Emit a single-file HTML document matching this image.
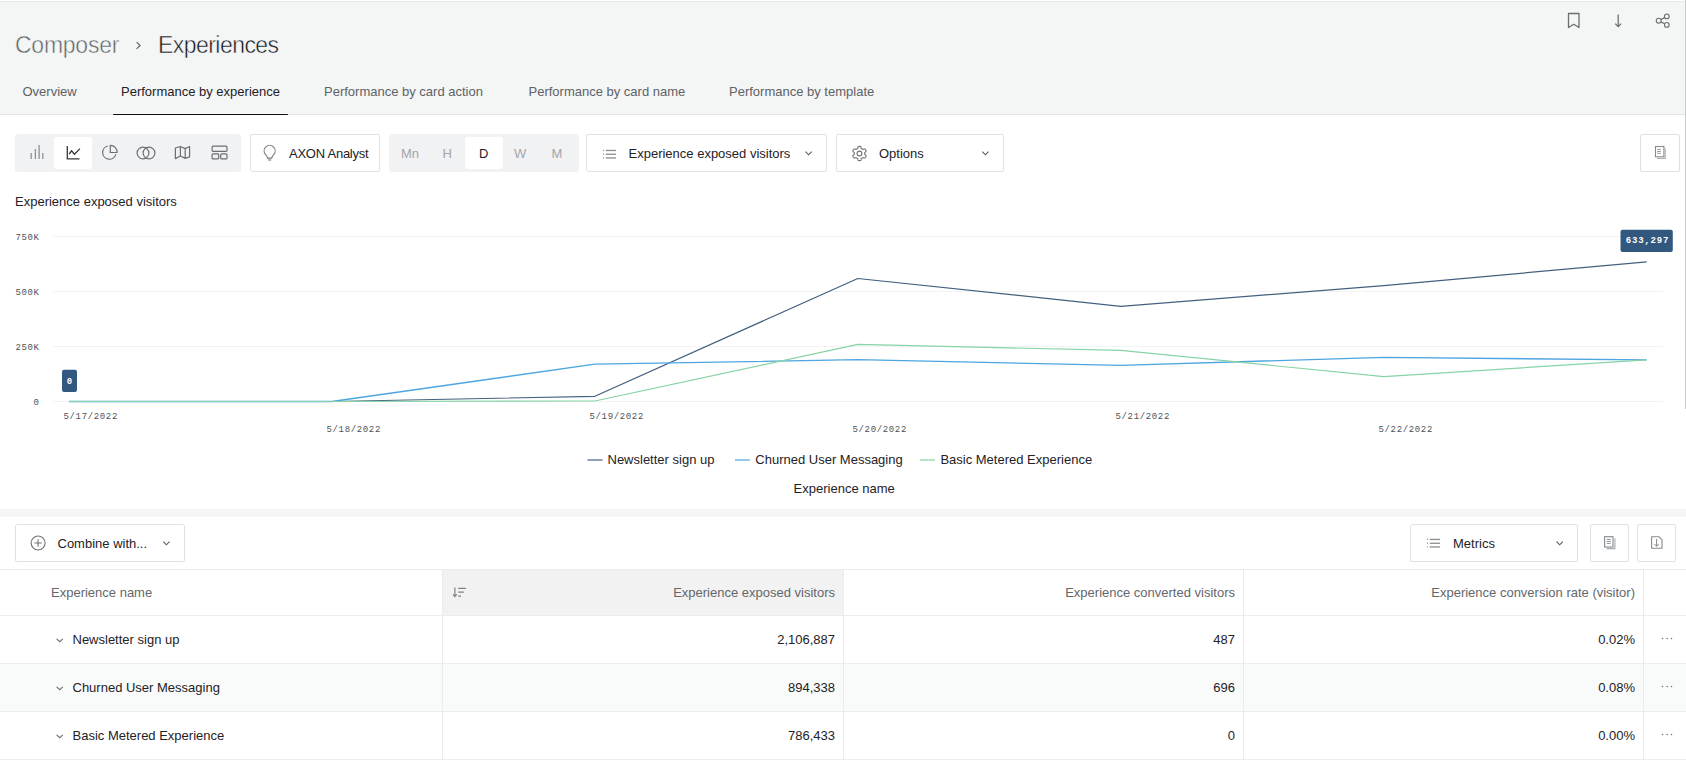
<!DOCTYPE html>
<html><head><meta charset="utf-8">
<style>
*{box-sizing:border-box;margin:0;padding:0}
html,body{width:1686px;height:760px;overflow:hidden;background:#fff;font-family:"Liberation Sans",sans-serif;color:#1e2226;font-size:13px}
.a{position:absolute}
#hdr{left:0;top:1px;width:1686px;height:114px;background:#f4f5f5;border-top:1px solid #e8eaea;border-bottom:1px solid #e3e5e5}
.crumb{font-size:23px;white-space:nowrap;line-height:1;-webkit-text-stroke:.5px #f4f5f5}
.tab{font-size:13px;color:#5f6266;white-space:nowrap;line-height:1}
.grp{background:#f1f2f3;border-radius:3px}
.act{background:#fff;border-radius:3px}
.btn{background:#fff;border:1px solid #dfe1e3;border-radius:2px}
.t13{font-size:13px;line-height:1;white-space:nowrap}
.mono{font-family:"Liberation Mono",monospace;font-size:9px;letter-spacing:.65px;color:#505356;line-height:1;white-space:nowrap}
.hd{color:#63676b}
.num{text-align:right}
svg{position:absolute;overflow:visible}
</style></head><body>
<div id="hdr" class="a"></div>
<div class="a" style="left:1685px;top:0;width:1px;height:409px;background:#c9cbcd"></div>

<!-- breadcrumb -->
<div class="a crumb" style="left:15px;top:33.5px;color:#5f6367;letter-spacing:-0.25px">Composer</div>
<svg style="left:0;top:0" width="200" height="60"><path d="M136.6 42.2L140.1 45.5L136.6 48.8" fill="none" stroke="#5a5e63" stroke-width="1.1"/></svg>
<div class="a crumb" style="left:158px;top:33.5px;color:#0d1116;letter-spacing:-0.55px">Experiences</div>

<!-- header icons -->
<svg style="left:0;top:0" width="1686" height="40">
 <path d="M1568.5 27.5V13.5H1579V27.5L1573.8 24.3Z" fill="none" stroke="#6b6f73" stroke-width="1.3" stroke-linejoin="round"/>
 <path d="M1618.2 14.5V26.5M1615.2 23.6L1618.2 26.6L1621.2 23.6" fill="none" stroke="#6b6f73" stroke-width="1.3"/>
 <circle cx="1666.8" cy="16.4" r="2.35" fill="none" stroke="#6b6f73" stroke-width="1.1"/>
 <circle cx="1666.8" cy="24.9" r="2.35" fill="none" stroke="#6b6f73" stroke-width="1.1"/>
 <circle cx="1658.7" cy="20.7" r="2.45" fill="none" stroke="#6b6f73" stroke-width="1.1"/>
 <path d="M1661 19.5L1664.6 17.6M1661 21.9L1664.6 23.7" stroke="#6b6f73" stroke-width="1.2"/>
</svg>

<!-- tabs -->
<div class="a tab" style="left:22.5px;top:85px">Overview</div>
<div class="a tab" style="left:121px;top:85px;color:#1e2226">Performance by experience</div>
<div class="a" style="left:113px;top:113px;width:175px;height:1px;background:#fbfbfb"></div><div class="a" style="left:113px;top:114px;width:175px;height:1.4px;background:#0c0f12;border-radius:1px"></div>
<div class="a tab" style="left:324px;top:85px">Performance by card action</div>
<div class="a tab" style="left:528.5px;top:85px">Performance by card name</div>
<div class="a tab" style="left:729px;top:85px">Performance by template</div>


<!-- toolbar -->
<div class="a grp" style="left:15px;top:134px;width:226px;height:38px"></div>
<div class="a act" style="left:54px;top:137px;width:38px;height:32px"></div>
<div class="a grp" style="left:389px;top:134px;width:190px;height:38px"></div>
<div class="a act" style="left:465px;top:137px;width:38px;height:32px"></div>
<div class="a btn" style="left:250px;top:134px;width:130px;height:38px"></div>
<div class="a btn" style="left:586px;top:134px;width:241px;height:38px"></div>
<div class="a btn" style="left:836px;top:134px;width:168px;height:38px"></div>
<div class="a btn" style="left:1640px;top:134px;width:40px;height:38px"></div>
<svg style="left:0;top:0" width="1686" height="200">
 <g stroke="#8d9196" stroke-width="1.3" fill="none">
  <path d="M31.2 153V159M35.4 149V159M39.1 145V159M42.8 153V159"/>
 </g>
 <g stroke="#34383c" stroke-width="1.3" fill="none" stroke-linejoin="miter">
  <path d="M67.3 146V158.8H79.5"/>
  <path d="M69.2 154L71.6 150.8L74.5 154.2L79.9 148.6"/>
 </g>
 <g stroke="#6b6f74" stroke-width="1.2" fill="none">
  <path d="M107.8 146A6.7 6.7 0 1 0 115.8 154.3"/>
  <path d="M110.3 145.3V152.5H117A6.7 6.7 0 0 0 110.3 145.3Z"/>
  <circle cx="143" cy="153" r="5.9"/>
  <circle cx="149" cy="153" r="5.9"/>
  <path d="M175.4 148L180.4 146.5L185.2 148.6L189.6 146.5V156.9L185.2 158.4L180.4 156L175.4 158.6Z M180.4 146.5V156 M185.2 148.6V158.4" stroke-linejoin="round"/>
  <rect x="212.1" y="146.2" width="14.9" height="5.1" rx="1"/>
  <rect x="212.1" y="153.9" width="6.6" height="5" rx="1"/>
  <rect x="220.7" y="153.9" width="6.3" height="5" rx="1"/>
 </g>
 <g stroke="#76797d" stroke-width="1.1" fill="none">
  <path transform="translate(0 .7)" d="M267.6 157.4C267.4 155.8 266.4 154.6 265.4 153.6A5.5 5.5 0 1 1 273.9 153.6C272.9 154.6 271.9 155.8 271.7 157.4Z"/>
  <path d="M268.2 160H271.2"/>
 </g>
 <g fill="#8a8d91">
  <rect x="603" y="149.8" width="1" height="1.2"/><rect x="603" y="153.6" width="1" height="1.2"/><rect x="603" y="157.3" width="1" height="1.2"/>
  <rect x="605.8" y="149.8" width="10.2" height="1.3"/><rect x="605.8" y="153.6" width="10.2" height="1.3"/><rect x="605.8" y="157.3" width="10.2" height="1.3"/>
 </g>
 <path d="M805.5 151.7L808.6 154.8L811.7 151.7" stroke="#55595d" stroke-width="1.1" fill="none"/>
 <path d="M982.3 151.7L985.4 154.8L988.5 151.7" stroke="#55595d" stroke-width="1.1" fill="none"/>
 <g stroke="#6f7377" stroke-width="1.1" fill="none">
  <path d="M859.50 146.40L859.75 146.40L860.00 146.42L860.24 146.44L860.49 146.47L860.73 146.51L860.92 146.82L861.04 147.33L861.12 147.86L861.16 148.38L861.31 148.52L861.49 148.59L861.66 148.66L861.82 148.74L861.99 148.82L862.15 148.91L862.31 149.01L862.46 149.11L862.62 149.21L862.76 149.32L862.91 149.44L863.10 149.50L863.57 149.28L864.07 149.09L864.58 148.93L864.94 148.94L865.09 149.13L865.24 149.33L865.39 149.53L865.52 149.74L865.65 149.95L865.77 150.17L865.88 150.39L865.99 150.61L866.08 150.84L866.17 151.07L866.00 151.39L865.61 151.75L865.19 152.08L864.77 152.38L864.72 152.58L864.75 152.76L864.77 152.95L864.79 153.13L864.80 153.32L864.80 153.50L864.80 153.68L864.79 153.87L864.77 154.05L864.75 154.24L864.72 154.42L864.77 154.62L865.19 154.92L865.61 155.25L866.00 155.61L866.17 155.93L866.08 156.16L865.99 156.39L865.88 156.61L865.77 156.83L865.65 157.05L865.52 157.26L865.39 157.47L865.24 157.67L865.09 157.87L864.94 158.06L864.58 158.07L864.07 157.91L863.57 157.72L863.10 157.50L862.91 157.56L862.76 157.68L862.62 157.79L862.46 157.89L862.31 157.99L862.15 158.09L861.99 158.18L861.82 158.26L861.66 158.34L861.49 158.41L861.31 158.48L861.16 158.62L861.12 159.14L861.04 159.67L860.92 160.18L860.73 160.49L860.49 160.53L860.24 160.56L860.00 160.58L859.75 160.60L859.50 160.60L859.25 160.60L859.00 160.58L858.76 160.56L858.51 160.53L858.27 160.49L858.08 160.18L857.96 159.67L857.88 159.14L857.84 158.62L857.69 158.48L857.51 158.41L857.34 158.34L857.18 158.26L857.01 158.18L856.85 158.09L856.69 157.99L856.54 157.89L856.38 157.79L856.24 157.68L856.09 157.56L855.90 157.50L855.43 157.72L854.93 157.91L854.42 158.07L854.06 158.06L853.91 157.87L853.76 157.67L853.61 157.47L853.48 157.26L853.35 157.05L853.23 156.83L853.12 156.61L853.01 156.39L852.92 156.16L852.83 155.93L853.00 155.61L853.39 155.25L853.81 154.92L854.23 154.62L854.28 154.42L854.25 154.24L854.23 154.05L854.21 153.87L854.20 153.68L854.20 153.50L854.20 153.32L854.21 153.13L854.23 152.95L854.25 152.76L854.28 152.58L854.23 152.38L853.81 152.08L853.39 151.75L853.00 151.39L852.83 151.07L852.92 150.84L853.01 150.61L853.12 150.39L853.23 150.17L853.35 149.95L853.48 149.74L853.61 149.53L853.76 149.33L853.91 149.13L854.06 148.94L854.42 148.93L854.93 149.09L855.43 149.28L855.90 149.50L856.09 149.44L856.24 149.32L856.38 149.21L856.54 149.11L856.69 149.01L856.85 148.91L857.01 148.82L857.18 148.74L857.34 148.66L857.51 148.59L857.69 148.52L857.84 148.38L857.88 147.86L857.96 147.33L858.08 146.82L858.27 146.51L858.51 146.47L858.76 146.44L859.00 146.42L859.25 146.40L859.50 146.40Z" stroke-linejoin="round"/>
  <circle cx="859.5" cy="153.5" r="2.4"/>
 </g>
 <g fill="none" stroke="#868a8e">
  <rect x="1655.5" y="146.5" width="8.4" height="10.3" stroke-width="1.1"/>
  <path d="M1665.2 148.2V158.5H1657" stroke-width="1.1" stroke="#a9acb0"/>
  <path d="M1657.2 149.4H1660.8M1657.2 151.5H1660.8M1657.2 153.3H1660.8" stroke-width="0.9"/>
 </g>
</svg>
<div class="a t13" style="left:289px;top:147px;letter-spacing:-.25px">AXON Analyst</div>
<div class="a t13" style="left:401px;top:147px;color:#a3a6aa">Mn</div>
<div class="a t13" style="left:442.5px;top:147px;color:#a3a6aa">H</div>
<div class="a t13" style="left:479px;top:147px;color:#1e2226">D</div>
<div class="a t13" style="left:514px;top:147px;color:#a3a6aa">W</div>
<div class="a t13" style="left:551.5px;top:147px;color:#a3a6aa">M</div>
<div class="a t13" style="left:628.5px;top:147px">Experience exposed visitors</div>
<div class="a t13" style="left:879px;top:147px">Options</div>

<!-- chart -->
<div class="a t13" style="left:15px;top:195px">Experience exposed visitors</div>
<svg style="left:0;top:0" width="1686" height="450">
 <g stroke="#f2f3f3" stroke-width="1">
  <path d="M53 236.5H1663M53 291.5H1663M53 346.5H1663M53 401.5H1663"/>
 </g>
 <polyline points="69.0,401.5 331.9,401.5 594.9,396.3 857.8,278.5 1120.8,306.3 1383.8,285.6 1646.7,261.9" fill="none" stroke="#44607f" stroke-width="1.2" stroke-linejoin="round"/>
 <polyline points="69.0,401.5 331.9,401.5 594.9,364.2 857.8,359.7 1120.8,365.3 1383.8,357.4 1646.7,359.9" fill="none" stroke="#4ea5e0" stroke-width="1.3" stroke-linejoin="round"/>
 <polyline points="69.0,401.5 331.9,401.5 594.9,401.0 857.8,344.4 1120.8,350.4 1383.8,376.6 1646.7,359.9" fill="none" stroke="#86d3a5" stroke-width="1.2" stroke-linejoin="round"/>
 <rect x="62" y="369.7" width="15" height="22.2" rx="2" fill="#33587f"/>
 <rect x="1620.5" y="229.8" width="52.3" height="22.2" rx="2" fill="#33587f"/>
</svg>
<div class="a mono" style="left:15.4px;top:234px">750K</div>
<div class="a mono" style="left:15.4px;top:289.3px">500K</div>
<div class="a mono" style="left:15.4px;top:344.2px">250K</div>
<div class="a mono" style="left:33.6px;top:399.3px">0</div>
<div class="a mono" style="left:63.5px;top:413px">5/17/2022</div>
<div class="a mono" style="left:326.5px;top:426.2px">5/18/2022</div>
<div class="a mono" style="left:589.5px;top:413px">5/19/2022</div>
<div class="a mono" style="left:852.5px;top:426.2px">5/20/2022</div>
<div class="a mono" style="left:1115.5px;top:413px">5/21/2022</div>
<div class="a mono" style="left:1378.5px;top:426.2px">5/22/2022</div>
<div class="a mono" style="left:66.8px;top:378px;color:#fff;font-weight:bold">0</div>
<div class="a mono" style="left:1625.8px;top:237px;color:#fff;font-weight:bold;letter-spacing:.8px">633,297</div>

<!-- legend -->
<svg style="left:0;top:0" width="1686" height="500">
 <path d="M587.5 460H602.5" stroke="#44607f" stroke-width="1.2"/>
 <path d="M735 460H750" stroke="#4ea5e0" stroke-width="1.2"/>
 <path d="M920 460H935" stroke="#86d3a5" stroke-width="1.2"/>
</svg>
<div class="a t13" style="left:607.5px;top:453px">Newsletter sign up</div>
<div class="a t13" style="left:755.3px;top:453px">Churned User Messaging</div>
<div class="a t13" style="left:940.4px;top:453px">Basic Metered Experience</div>
<div class="a t13" style="left:793.6px;top:482px">Experience name</div>

<!-- lower section -->
<div class="a" style="left:0;top:509px;width:1686px;height:8px;background:#f4f5f5"></div>
<div class="a btn" style="left:15px;top:524px;width:170px;height:38px"></div>
<div class="a btn" style="left:1410px;top:524px;width:168px;height:38px"></div>
<div class="a btn" style="left:1590px;top:524px;width:39px;height:38px"></div>
<div class="a btn" style="left:1637px;top:524px;width:39px;height:38px"></div>
<div class="a t13" style="left:57.5px;top:537px">Combine with...</div>
<div class="a t13" style="left:1453px;top:537px">Metrics</div>

<!-- table -->
<div class="a" style="left:0;top:569px;width:1686px;height:1px;background:#ebecec"></div>
<div class="a" style="left:442.5px;top:570px;width:401px;height:45px;background:#f2f2f2"></div>
<div class="a" style="left:0;top:615px;width:1686px;height:1px;background:#ebecec"></div>
<div class="a" style="left:0;top:664px;width:1686px;height:47px;background:#f9fafa"></div>
<div class="a" style="left:0;top:663px;width:1686px;height:1px;background:#ebecec"></div>
<div class="a" style="left:0;top:711px;width:1686px;height:1px;background:#ebecec"></div>
<div class="a" style="left:0;top:759px;width:1686px;height:1px;background:#ebecec"></div>
<div class="a" style="left:442px;top:569px;width:1px;height:191px;background:#ebecec"></div>
<div class="a" style="left:843px;top:569px;width:1px;height:191px;background:#ebecec"></div>
<div class="a" style="left:1243px;top:569px;width:1px;height:191px;background:#ebecec"></div>
<div class="a" style="left:1643px;top:569px;width:1px;height:191px;background:#ebecec"></div>

<div class="a t13 hd" style="left:51px;top:586px">Experience name</div>
<div class="a t13 hd num" style="right:851px;top:586px">Experience exposed visitors</div>
<div class="a t13 hd num" style="right:451px;top:586px">Experience converted visitors</div>
<div class="a t13 hd num" style="right:51px;top:586px">Experience conversion rate (visitor)</div>

<div class="a t13" style="left:72.5px;top:633px">Newsletter sign up</div>
<div class="a t13" style="left:72.5px;top:681px">Churned User Messaging</div>
<div class="a t13" style="left:72.5px;top:729px">Basic Metered Experience</div>
<div class="a t13 num" style="right:851px;top:633px">2,106,887</div>
<div class="a t13 num" style="right:851px;top:681px">894,338</div>
<div class="a t13 num" style="right:851px;top:729px">786,433</div>
<div class="a t13 num" style="right:451px;top:633px">487</div>
<div class="a t13 num" style="right:451px;top:681px">696</div>
<div class="a t13 num" style="right:451px;top:729px">0</div>
<div class="a t13 num" style="right:51px;top:633px">0.02%</div>
<div class="a t13 num" style="right:51px;top:681px">0.08%</div>
<div class="a t13 num" style="right:51px;top:729px">0.00%</div>

<svg style="left:0;top:0" width="1686" height="760">
 <g stroke="#6f7377" stroke-width="1.1" fill="none">
  <circle cx="38.1" cy="543" r="7"/>
  <path d="M34.4 543H41.8M38.1 539.2V546.8"/>
 </g>
 <path d="M163.3 541.7L166.4 544.8L169.5 541.7" stroke="#55595d" stroke-width="1.1" fill="none"/>
 <path d="M1556.6 541.7L1559.7 544.8L1562.8 541.7" stroke="#55595d" stroke-width="1.1" fill="none"/>
 <g fill="#8a8d91">
  <rect x="1427" y="538.8" width="1" height="1.2"/><rect x="1427" y="542.6" width="1" height="1.2"/><rect x="1427" y="546.3" width="1" height="1.2"/>
  <rect x="1429.8" y="538.8" width="10.2" height="1.3"/><rect x="1429.8" y="542.6" width="10.2" height="1.3"/><rect x="1429.8" y="546.3" width="10.2" height="1.3"/>
 </g>
 <g fill="none" stroke="#868a8e">
  <rect x="1604.6" y="536.7" width="8.4" height="10.3" stroke-width="1.1"/>
  <path d="M1614.9 538.3V548.6H1606.5" stroke-width="1.1" stroke="#a9acb0"/>
  <path d="M1606.8 539.4H1610.8M1606.8 541.4H1610.8M1606.8 543.4H1610.8" stroke-width="0.9"/>
  <path d="M1651.6 536.7H1658.9L1662 539.8V548.3H1651.6Z" stroke-width="1.1" stroke-linejoin="round"/>
  <path d="M1656.6 539V546.3M1654.3 544L1656.6 546.3L1658.9 544" stroke-width="1"/>
 </g>
 <g stroke="#808488" fill="none" stroke-width="1.2">
  <path d="M454.9 587.4V596.5M453 594.4L454.9 596.5L456.8 594.4"/>
  <path d="M458.2 588.4H465.9M458.2 592.2H463.9M458.2 596.1H461"/>
 </g>
 <g stroke="#6b6f73" stroke-width="1.1" fill="none">
  <path d="M56.6 638.8L59.7 641.7L62.8 638.8"/>
  <path d="M56.6 686.8L59.7 689.7L62.8 686.8"/>
  <path d="M56.6 734.8L59.7 737.7L62.8 734.8"/>
 </g>
 <g fill="#6b6f73">
  <circle cx="1662.5" cy="638.5" r=".75"/><circle cx="1667.1" cy="638.5" r=".75"/><circle cx="1671.5" cy="638.5" r=".75"/>
  <circle cx="1662.5" cy="686.5" r=".75"/><circle cx="1667.1" cy="686.5" r=".75"/><circle cx="1671.5" cy="686.5" r=".75"/>
  <circle cx="1662.5" cy="734.5" r=".75"/><circle cx="1667.1" cy="734.5" r=".75"/><circle cx="1671.5" cy="734.5" r=".75"/>
 </g>
</svg>
</body></html>
